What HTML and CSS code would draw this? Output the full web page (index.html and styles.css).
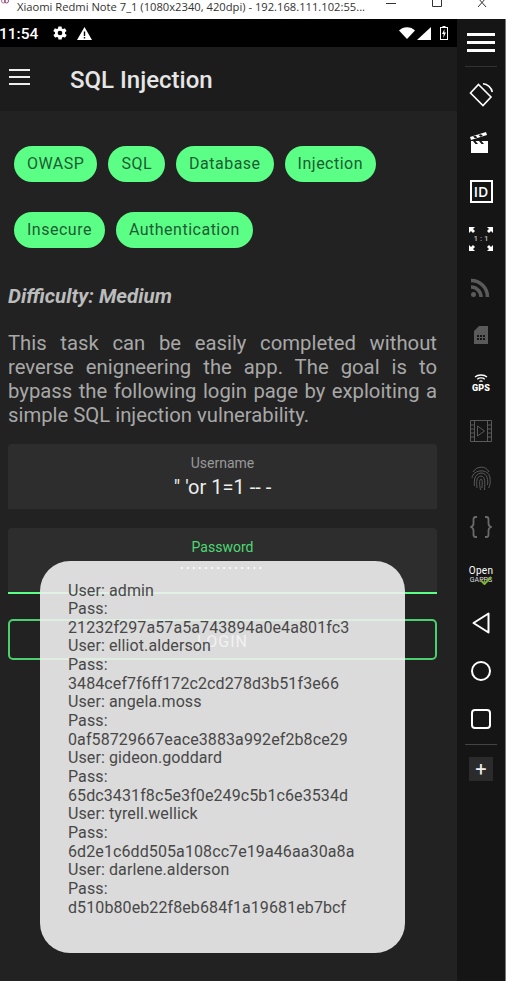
FILE: index.html
```html
<!DOCTYPE html>
<html lang="en">
<head>
    <meta charset="UTF-8">
    <title>SQL Injection</title>
    <link rel="stylesheet" href="styles.css">
</head>
<body>
    <div class="titlebar">
        <svg class="app-icon" width="8" height="6" viewBox="0 0 8 6"><circle cx="2.5" cy="1" r="2" fill="none" stroke="#b06a9a"/><circle cx="5.5" cy="1" r="2" fill="none" stroke="#8a4a78"/></svg>
        <span class="window-title">Xiaomi Redmi Note 7_1 (1080x2340, 420dpi) - 192.168.111.102:55...</span>
        <div class="window-btns">
            <svg width="10" height="10" viewBox="0 0 10 10"><path d="M0 3.500H10" stroke="#333"/></svg>
            <svg width="10" height="10" viewBox="0 0 10 10"><path d="M.5 -3H9.5V6.500H.5Z" fill="none" stroke="#333"/></svg>
            <svg width="10" height="10" viewBox="0 0 10 10"><path d="M0 -2L8 7M8 -2L0 7" fill="none" stroke="#333"/></svg>
        </div>
    </div>

    <div class="main">
        <div class="phone">
            <div class="statusbar">
                <span class="clock">11:54</span>
                <svg class="gear" width="16" height="16" viewBox="0 0 24 24"><path fill="#fff" d="M19.4 13c.1-.3.1-.7.1-1s0-.7-.1-1l2.1-1.6c.2-.2.2-.4.1-.6l-2-3.5c-.1-.2-.4-.3-.6-.2l-2.5 1c-.5-.4-1.1-.7-1.700-1l-.4-2.600c0-.2-.2-.4-.5-.4h-4c-.2 0-.4.200-.5.400l-.4 2.600c-.6.300-1.200.600-1.700 1l-2.500-1c-.2-.1-.5 0-.6.200l-2 3.500c-.1.200-.1.500.1.600L4.600 11c-.1.300-.1.700-.1 1s0 .7.100 1l-2.100 1.600c-.2.200-.2.400-.1.600l2 3.500c.1.200.4.300.6.200l2.500-1c.5.400 1.100.700 1.700 1l.4 2.600c0 .2.200.4.500.4h4c.2 0 .4-.2.500-.4l.4-2.600c.6-.3 1.200-.6 1.700-1l2.500 1c.2.100.5 0 .6-.2l2-3.500c.1-.2.100-.4-.1-.6zM12 15.500a3.500 3.500 0 1 1 0-7 3.500 3.500 0 0 1 0 7z"/></svg>
                <svg class="warn" width="15" height="13" viewBox="0 0 15 13"><path fill="#fff" fill-rule="evenodd" d="M7.500 0L15 13H0ZM6.800 4.500V9H8.200V4.500ZM6.800 10V11.400H8.200V10Z"/></svg>
                <div class="status-right">
                    <svg width="16" height="12" viewBox="0 0 16 12"><path fill="#fff" d="M0 3.500C4 -1 12 -1 16 3.500L8 12Z"/></svg>
                    <svg width="14" height="13" viewBox="0 0 14 13"><path fill="#fff" d="M14 0V13H0Z"/></svg>
                    <svg class="battery" width="8" height="14" viewBox="0 0 8 14"><path fill="#fff" fill-rule="evenodd" d="M2.500 0H5.500V1H8V14H0V1H2.500ZM1 2V13H7V2ZM4.500 3L2 8H3.700L3.200 12L6 6.500H4.300Z"/></svg>
                </div>
            </div>

            <div class="appbar">
                <div class="hamburger"><i></i><i></i><i></i></div>
                <h1 class="app-title">SQL Injection</h1>
            </div>

            <div class="content">
                <div class="tags">
                    <span class="tag">OWASP</span>
                    <span class="tag">SQL</span>
                    <span class="tag">Database</span>
                    <span class="tag">Injection</span>
                    <span class="tag">Insecure</span>
                    <span class="tag">Authentication</span>
                </div>

                <p class="difficulty">Difficulty: Medium</p>
                <p class="desc">This task can be easily completed without reverse enigneering the app. The goal is to bypass the following login page by exploiting a simple SQL injection vulnerability.</p>

                <div class="field">
                    <span class="field-label">Username</span>
                    <span class="field-value">" 'or 1=1 -- -</span>
                </div>
                <div class="field field-active">
                    <span class="field-label">Password</span>
                    <span class="field-dots">••••••••••••••</span>
                </div>
                <button class="login">LOGIN</button>
            </div>

            <div class="toast">
                <div>User: admin</div>
                <div>Pass:</div>
                <div>21232f297a57a5a743894a0e4a801fc3</div>
                <div>User: elliot.alderson</div>
                <div>Pass:</div>
                <div>3484cef7f6ff172c2cd278d3b51f3e66</div>
                <div>User: angela.moss</div>
                <div>Pass:</div>
                <div>0af58729667eace3883a992ef2b8ce29</div>
                <div>User: gideon.goddard</div>
                <div>Pass:</div>
                <div>65dc3431f8c5e3f0e249c5b1c6e3534d</div>
                <div>User: tyrell.wellick</div>
                <div>Pass:</div>
                <div>6d2e1c6dd505a108cc7e19a46aa30a8a</div>
                <div>User: darlene.alderson</div>
                <div>Pass:</div>
                <div>d510b80eb22f8eb684f1a19681eb7bcf</div>
            </div>
        </div>

        <div class="sidebar">
            <div class="side-menu">
                <div class="side-burger"><i></i><i></i><i></i></div>
            </div>
            <div class="side-item">
                <svg width="26" height="26" viewBox="0 0 26 26" fill="none" stroke="#fff" stroke-width="1.600"><path d="M10.500 2.500L23 15 15 23.500 2.500 11Z"/><path d="M15 1.800C19.500 2 23.500 5.500 24.300 10"/></svg>
            </div>
            <div class="side-item">
                <svg width="22" height="24" viewBox="0 0 22 24"><path fill="#fff" d="M1 10H18V22H1Z"/><path fill="#fff" d="M0 6L16 1 17 4 1 9Z"/><path fill="#151515" d="M3 5.500L5.500 4.700 7.500 6.500 5 7.300ZM8.500 4L11 3.200 13 5 10.500 5.800ZM3 10L5.500 13H8L5.500 10ZM9 10L11.500 13H14L11.500 10Z"/></svg>
            </div>
            <div class="side-item">
                <div class="id-box">ID</div>
            </div>
            <div class="side-item">
                <div class="ratio">
                    <svg width="24" height="24" viewBox="0 0 24 24"><path fill="#fff" d="M0 0L6 0 4 2 6 4 4 6 2 4 0 6ZM24 0L18 0 20 2 18 4 20 6 22 4 24 6ZM0 24L6 24 4 22 6 20 4 18 2 20 0 18ZM24 24L18 24 20 22 18 20 20 18 22 20 24 18Z"/></svg>
                    <span class="ratio-text">1 : 1</span>
                </div>
            </div>
            <div class="side-item">
                <svg width="20" height="20" viewBox="0 0 20 20" fill="none" stroke="#5a5a5a" stroke-width="3.500"><path d="M0 10A10 10 0 0 1 10 20"/><path d="M0 3.500A16.500 16.500 0 0 1 16.500 20"/><circle cx="2.500" cy="17.500" r="2.500" fill="#5a5a5a" stroke="none"/></svg>
            </div>
            <div class="side-item">
                <svg width="14" height="18" viewBox="0 0 14 18"><path fill="#5a5a5a" fill-rule="evenodd" d="M5 0H14V18H0V5ZM3 9V11H5V9ZM6 9V11H8V9ZM9 9V11H11V9ZM3 12V14H5V12ZM6 12V14H8V12ZM9 12V14H11V12Z"/></svg>
            </div>
            <div class="side-item side-gps">
                <svg width="14" height="9" viewBox="0 0 14 9" fill="none" stroke="#fff" stroke-width="1.300"><path d="M1 3C4 .3 10 .3 13 3"/><path d="M3.200 5.200C5.200 3.500 8.800 3.500 10.800 5.200"/><path d="M5.500 7.500C6.400 6.800 7.600 6.800 8.500 7.500"/></svg>
                <span class="gps-text">GPS</span>
            </div>
            <div class="side-item">
                <svg width="22" height="22" viewBox="0 0 22 22" fill="none" stroke="#5a5a5a"><path d="M.5 .5H21.500V21.500H.5ZM4.500 .5V21.500M17.500 .5V21.500M.5 5H4.500M.5 9H4.500M.5 13H4.500M.5 17H4.500M17.500 5H21.500M17.500 9H21.500M17.500 13H21.500M17.500 17H21.500"/><path d="M7.500 6L14.500 11 7.500 16Z"/></svg>
            </div>
            <div class="side-item">
                <svg width="20" height="26" viewBox="0 0 20 26" fill="none" stroke="#5a5a5a"><path d="M2 6C6 -.5 15 -.5 18 6"/><path d="M1 12C2 3 18 2 19 12C19.500 17 19 20 17.500 22"/><path d="M3.500 20C3 15 3 8 10 7C17 7 17 15 16.500 19"/><path d="M6 22C5.500 16 5 10.500 10 10C14.500 10.500 14 17 13.500 24"/><path d="M9.500 24C8.500 19 8 13.500 10 13C12 13 11 20 11 22"/></svg>
            </div>
            <div class="side-item">
                <svg width="22" height="22" viewBox="0 0 22 22" fill="none" stroke="#6a6a6a" stroke-width="1.800"><path d="M7 1H5.500Q3.500 1 3.500 3.500V7.500Q3.500 10 1 11Q3.500 12 3.500 14.500V18.500Q3.500 21 5.500 21H7"/><path d="M15 1H16.500Q18.500 1 18.500 3.500V7.500Q18.500 10 21 11Q18.500 12 18.500 14.500V18.500Q18.500 21 16.500 21H15"/></svg>
            </div>
            <div class="side-item side-gapps">
                <span class="open-text">Open</span>
                <span class="gapps-text">GAPPS</span>
                <svg class="gapps-check" width="12" height="9" viewBox="0 0 12 9"><path d="M1 4.500L4.500 8 11 1" fill="none" stroke="#7fb53a" stroke-width="2"/></svg>
            </div>
            <div class="side-item">
                <svg width="18" height="22" viewBox="0 0 18 22"><path d="M16.500 1.500V20.500L1.500 11Z" fill="none" stroke="#fff" stroke-width="2" stroke-linejoin="round"/></svg>
            </div>
            <div class="side-item">
                <svg width="20" height="20" viewBox="0 0 20 20"><circle cx="10" cy="10" r="9" fill="none" stroke="#fff" stroke-width="2"/></svg>
            </div>
            <div class="side-item">
                <svg width="20" height="20" viewBox="0 0 20 20"><rect x="1" y="1" width="18" height="18" rx="3" fill="none" stroke="#fff" stroke-width="2"/></svg>
            </div>
            <div class="side-divider"></div>
            <div class="side-plus">+</div>
        </div>
    </div>
</body>
</html>
```

FILE: styles.css
```css
* {
    box-sizing: border-box;
}
html, body {
    height: 100%;
}
body {
    margin: 0;
    background-color: #222;
    font-family: Roboto, "Liberation Sans", sans-serif;
    overflow: hidden;
}

/* window title, cut off at the top */
.titlebar {
    height: 19px;
    background-color: #fff;
    display: flex;
    overflow: hidden;
}
.app-icon {
    margin-left: 1px;
    flex-shrink: 0;
}
.window-title {
    margin-left: 8px;
    font-family: "Open Sans", sans-serif;
    font-size: 11.2px;
    line-height: 13px;
    color: #333;
    white-space: nowrap;
}
.window-btns {
    margin-left: auto;
    margin-right: 18px;
    display: flex;
    gap: 36px;
}

.main {
    height: 962px;
    display: flex;
}
.phone {
    position: relative;
    width: 457px;
    background-color: #222;
}

.statusbar {
    height: 28px;
    background-color: #000;
    display: flex;
    align-items: center;
    color: #fff;
}
.clock {
    margin-left: -1px;
    font-size: 15.5px;
    font-weight: 500;
    margin-top: 1px;
}
.gear {
    margin-left: 14px;
}
.warn {
    margin-left: 9px;
}
.status-right {
    margin-left: auto;
    margin-right: 9px;
    display: flex;
    align-items: center;
    gap: 2px;
}
.battery {
    margin-left: 7px;
}

.appbar {
    height: 64px;
    background-color: #1c1c1c;
    display: flex;
    align-items: center;
    padding-left: 9px;
}
.hamburger i {
    display: block;
    width: 21px;
    height: 2px;
    background-color: #eee;
    margin-bottom: 5px;
}
.hamburger i:last-child {
    margin-bottom: 0;
}
.hamburger {
    margin-top: -4px;
}
.app-title {
    margin: 2px 0 0 40px;
    font-size: 24px;
    font-weight: 500;
    color: #e6e6e6;
}

.content {
    padding: 35px 20px 0 8px;
}
.tags {
    display: flex;
    flex-wrap: wrap;
    gap: 30px 11px;
    padding-left: 6px;
}
.tag {
    height: 36px;
    line-height: 36px;
    padding: 0 13px;
    border-radius: 18px;
    background-color: #5cff85;
    color: #1d5c34;
    font-size: 16px;
    letter-spacing: 0.5px;
}
.difficulty {
    margin: 36px 0 0;
    font-size: 20.5px;
    line-height: 24px;
    font-weight: 700;
    font-style: italic;
    color: #bcbcbc;
}
.desc {
    margin: 23px 0 0;
    font-size: 20.3px;
    line-height: 24px;
    color: #a8a8a8;
    text-align: justify;
}

.field {
    height: 65px;
    margin-top: 17px;
    background-color: #2d2d2d;
    border-radius: 4px 4px 0 0;
    display: flex;
    flex-direction: column;
    align-items: center;
    padding-top: 11px;
}
.field + .field {
    margin-top: 19px;
}
.field-label {
    font-size: 14px;
    line-height: 17px;
    color: #999;
}
.field-value {
    margin-top: 3px;
    font-size: 20px;
    line-height: 24px;
    color: #eee;
}
.field-active {
    height: 66px;
    border-bottom: 2px solid #5cff85;
}
.field-active .field-label {
    color: #4fd873;
}
.field-dots {
    margin-top: 5px;
    font-size: 9px;
    line-height: 14px;
    color: #fff;
    letter-spacing: 3px;
    position: relative;
    z-index: 2;
}
.login {
    display: block;
    width: 100%;
    height: 41px;
    margin-top: 25px;
    padding-top: 4px;
    background: none;
    border: 2px solid #4ccf6e;
    border-radius: 5px;
    font-family: inherit;
    font-size: 16px;
    letter-spacing: 1px;
    color: #fff;
}

.toast {
    position: absolute;
    left: 40px;
    top: 542px;
    width: 365px;
    height: 392px;
    padding: 20.5px 28px;
    border-radius: 30px;
    background-color: rgba(240, 240, 240, 0.9);
    color: #484848;
    font-size: 16px;
    letter-spacing: 0.1px;
    line-height: 18.65px;
}

.sidebar {
    width: 49px;
    background-color: #151515;
    border-right: 1px solid #777;
    display: flex;
    flex-direction: column;
    align-items: center;
}
.side-menu {
    width: 100%;
    height: 52px;
    display: flex;
    flex-direction: column;
    align-items: center;
    padding-top: 14px;
}
.side-burger i {
    display: block;
    width: 28px;
    height: 3px;
    background-color: #fff;
    margin-bottom: 5px;
}
.side-menu::after {
    content: "";
    width: 32px;
    height: 1px;
    background-color: #333;
    margin-top: 9px;
}
.side-item {
    position: relative;
    height: 48px;
    flex-shrink: 0;
    width: 100%;
    display: flex;
    flex-direction: column;
    align-items: center;
    justify-content: center;
}
.id-box {
    width: 23px;
    height: 23px;
    border: 2px solid #fff;
    color: #fff;
    font-size: 14px;
    font-weight: 600;
    line-height: 19px;
    text-align: center;
    font-family: "Open Sans", sans-serif;
}
.ratio {
    position: relative;
    width: 24px;
    height: 24px;
}
.ratio-text {
    position: absolute;
    left: 0;
    right: 0;
    top: 6px;
    text-align: center;
    font-size: 8px;
    line-height: 12px;
    font-weight: 500;
    color: #bbb;
}
.gps-text {
    font-size: 9px;
    line-height: 10px;
    font-weight: 900;
    color: #fff;
    letter-spacing: 0.2px;
}
.open-text {
    font-size: 10px;
    line-height: 10px;
    color: #fff;
    letter-spacing: 0.3px;
}
.gapps-text {
    font-size: 7px;
    line-height: 9px;
    color: #ddd;
}
.gapps-check {
    position: absolute;
    left: 23px;
    top: 25px;
}
.side-divider {
    width: 32px;
    height: 1px;
    background-color: #444;
    flex-shrink: 0;
    margin-top: 1px;
}
.side-plus {
    width: 24px;
    height: 24px;
    margin-top: 12px;
    background-color: #2b2b2b;
    color: #eee;
    font-size: 20px;
    line-height: 24px;
    text-align: center;
}
```
